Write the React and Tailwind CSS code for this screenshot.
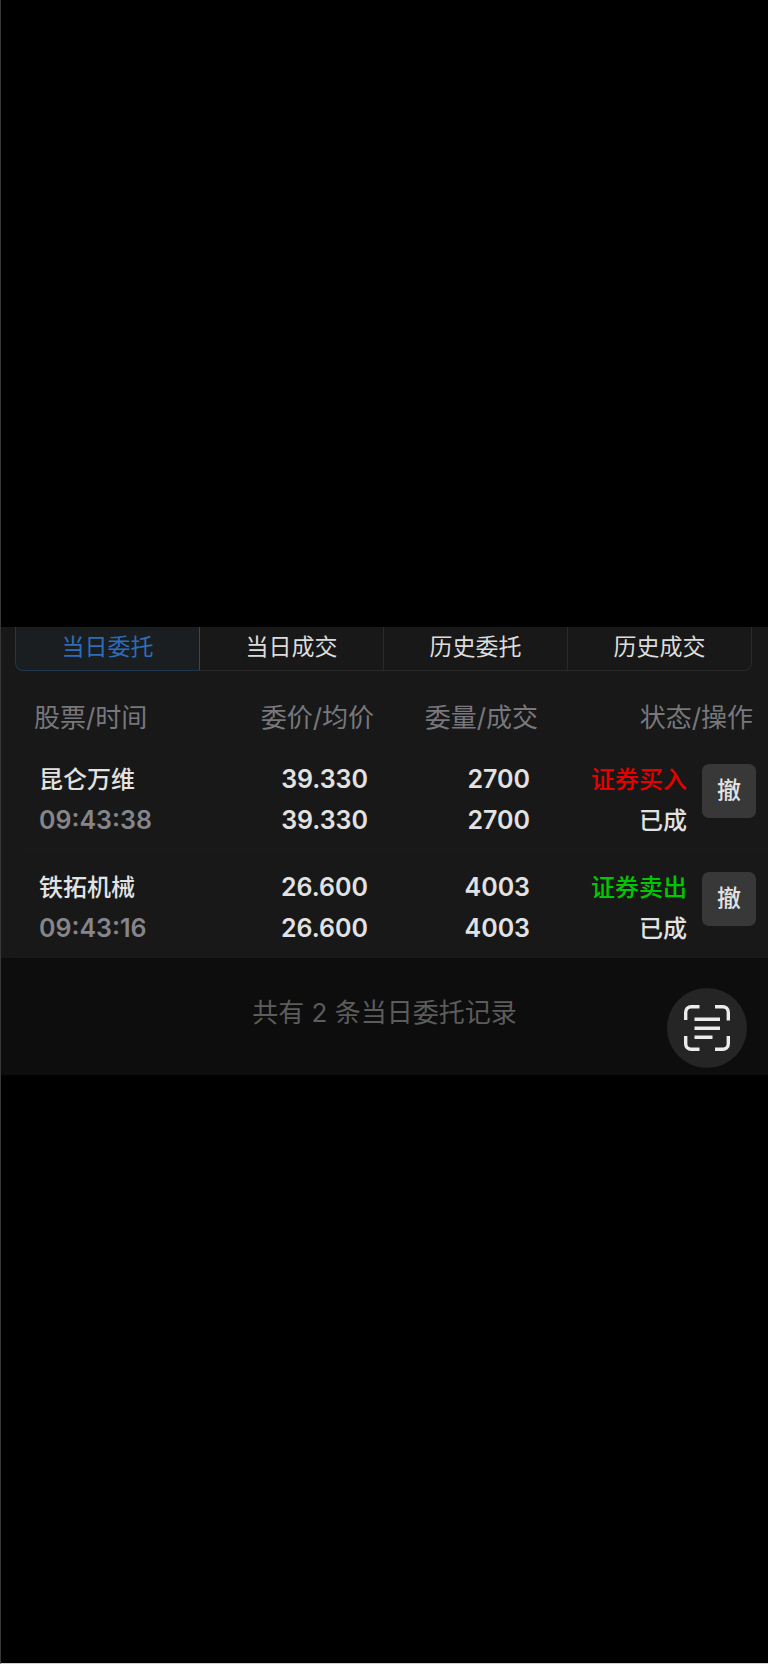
const tabs = ["当日委托", "当日成交", "历史委托", "历史成交"];

const orders = [
  { name: "昆仑万维", time: "09:43:38", price: "39.330", avg: "39.330", qty: "2700", filled: "2700", side: "证券买入", tone: "text-[#e60000]", state: "已成" },
  { name: "铁拓机械", time: "09:43:16", price: "26.600", avg: "26.600", qty: "4003", filled: "4003", side: "证券卖出", tone: "text-[#00c800]", state: "已成" },
];

function Tabs() {
  return (
    <nav aria-label="委托查询" className="flex pr-4 pl-[14px]">
      {tabs.map((label, i) => (
        <button
          key={label}
          type="button"
          aria-current={i === 0 ? "page" : undefined}
          className={
            "h-11 flex-1 border-b pb-[3px] text-[23px] leading-none " +
            (i === 0
              ? "rounded-bl-lg border-x border-[#20374f] border-r-[#2c486a] bg-[#1a1e21] text-[#2e6db9]"
              : i === tabs.length - 1
                ? "rounded-br-lg border-r border-[#2a2a2a] text-[#dcdcdc]"
                : "border-r border-[#2a2a2a] text-[#dcdcdc]")
          }
        >
          {label}
        </button>
      ))}
    </nav>
  );
}

function OrderRow({ order }) {
  return (
    <tr className="border-b border-[#1b1b1b] align-top text-[24px] leading-[41px] font-medium whitespace-nowrap text-[#e2e2e2]">
      <td className="pt-[17px] pb-2 pl-5">
        <div>{order.name}</div>
        <div className="text-[25px] font-semibold text-[#85858b]">{order.time}</div>
      </td>
      <td className="pt-[17px] pr-1.5 text-right text-[25px] font-semibold">
        <div>{order.price}</div>
        <div>{order.avg}</div>
      </td>
      <td className="pt-[17px] pr-2 text-right text-[25px] font-semibold">
        <div>{order.qty}</div>
        <div>{order.filled}</div>
      </td>
      <td className="pt-[17px] text-right">
        <div className={order.tone}>{order.side}</div>
        <div>{order.state}</div>
      </td>
      <td className="pt-[22px] pr-3">
        <button
          type="button"
          aria-label={"撤 " + order.name}
          className="ml-auto flex size-[54px] items-center justify-center rounded-[7px] bg-[#383838] leading-none font-medium"
        >
          撤
        </button>
      </td>
    </tr>
  );
}

function ScanIcon() {
  return (
    <svg viewBox="0 0 48 48" className="size-12" fill="none" stroke="#ececec" strokeWidth="3.4" aria-hidden="true">
      <path d="M2.7 16V8.2a5.5 5.5 0 0 1 5.5-5.5H16.5M32 2.7h7.8a5.5 5.5 0 0 1 5.5 5.5V16.5M45.3 32v7.8a5.5 5.5 0 0 1-5.5 5.5H32M16.5 45.3H8.2a5.5 5.5 0 0 1-5.5-5.5V32" />
      <path d="M11.5 15.2h25.5M11.5 24.2h25.5M11.5 33.2h18" />
    </svg>
  );
}

export default function App() {
  return (
    <div className="flex min-h-screen flex-col border-b border-l border-b-[#cfcfcf] border-l-[#383838] bg-black pt-[627px] font-['Inter','Noto_Sans_CJK_SC',sans-serif]">
      <main className="bg-[#181818]">
        <Tabs />
        <div className="pl-[18px]">
          <table className="w-full table-fixed border-collapse">
            <colgroup>
              <col className="w-[24.4%]" />
              <col className="w-[23%]" />
              <col className="w-[21.9%]" />
              <col className="w-[19.9%]" />
              <col className="w-[10.8%]" />
            </colgroup>
            <thead>
              <tr className="text-[26px] leading-[48px] whitespace-nowrap text-[#77777c]">
                <th className="pt-[23px] pl-[15px] text-left font-normal">股票/时间</th>
                <th className="pt-[23px] text-right font-normal">委价/均价</th>
                <th className="pt-[23px] text-right font-normal">委量/成交</th>
                <th colSpan={2} className="pt-[23px] pr-[15px] text-right font-normal">状态/操作</th>
              </tr>
            </thead>
            <tbody>
              {orders.map((order) => (
                <OrderRow key={order.name} order={order} />
              ))}
            </tbody>
          </table>
        </div>
        <footer className="relative flex h-[117px] items-start justify-center bg-[#0d0d0d] pt-[34px] text-[26px] leading-[42px] text-[#5c5c5c]">
          <p>共有 2 条当日委托记录</p>
          <button
            type="button"
            aria-label="扫描文字"
            className="absolute top-[30px] right-[21px] flex size-20 items-center justify-center rounded-full bg-[#252525]"
          >
            <ScanIcon />
          </button>
        </footer>
      </main>
    </div>
  );
}
